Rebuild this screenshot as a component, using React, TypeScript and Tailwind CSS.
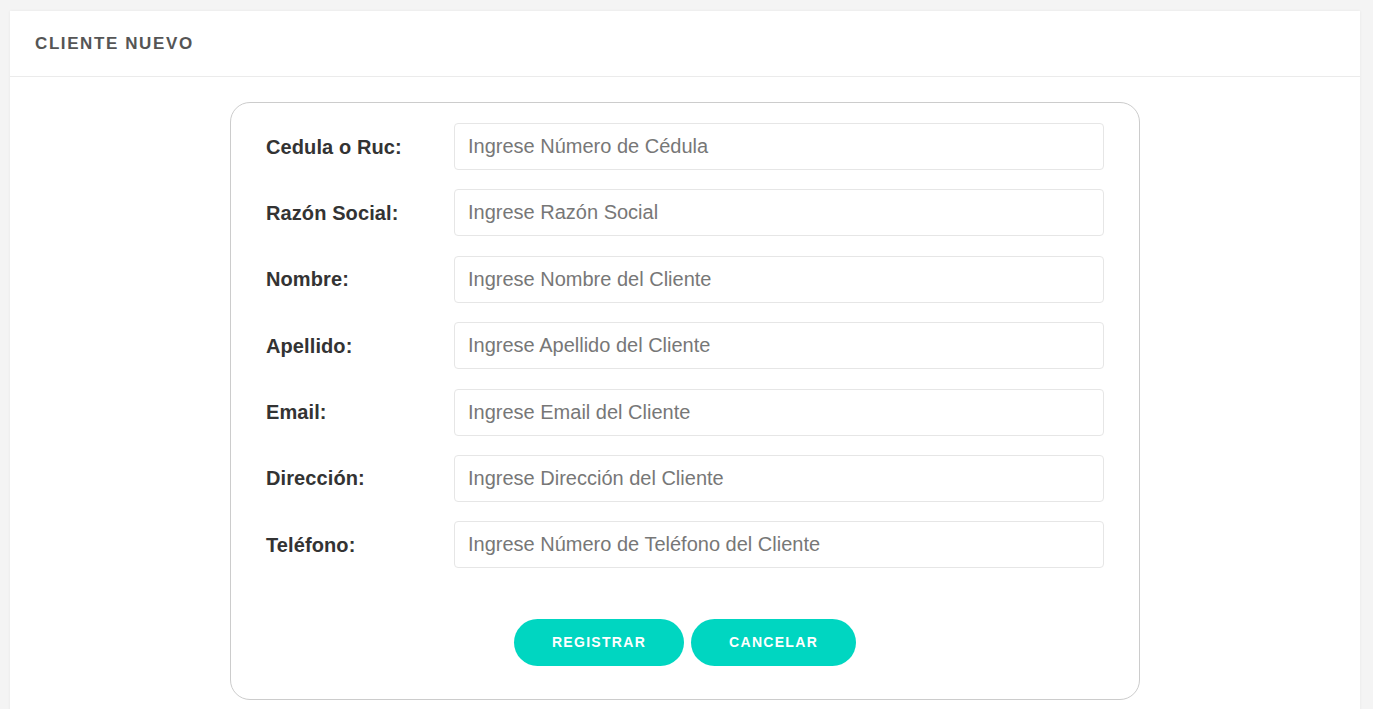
import React from "react";

const fields = [
  { label: "Cedula o Ruc:", ph: "Ingrese Número de Cédula" },
  { label: "Razón Social:", ph: "Ingrese Razón Social" },
  { label: "Nombre:", ph: "Ingrese Nombre del Cliente" },
  { label: "Apellido:", ph: "Ingrese Apellido del Cliente" },
  { label: "Email:", ph: "Ingrese Email del Cliente" },
  { label: "Dirección:", ph: "Ingrese Dirección del Cliente" },
  { label: "Teléfono:", ph: "Ingrese Número de Teléfono del Cliente" },
];

export default function App() {
  return (
    <div
      className="min-h-screen bg-[#f4f4f4] pt-[11px] pl-[10px] pr-[13px]"
      style={{ fontFamily: '"Liberation Sans", Arial, sans-serif' }}
    >
      <div className="bg-white min-h-[720px] shadow-[0_0_3px_rgba(0,0,0,0.06)]">
        <div className="h-[66px] border-b border-[#ebebeb] flex items-center pl-[25px]">
          <h1 className="text-[17px] font-bold tracking-[1.6px] text-[#555555] pt-[1px]">CLIENTE NUEVO</h1>
        </div>
        <div className="pt-[25px]">
          <div className="w-[910px] mx-auto border border-[#cccccc] rounded-[20px] pt-[20px] px-[35px] pb-[33px]">
            <div className="flex flex-col gap-[19.4px]">
              {fields.map((f) => (
                <div key={f.label} className="flex items-center">
                  <label className="w-[188px] shrink-0 text-[20px] font-bold text-[#333333] tracking-[0.1px]">{f.label}</label>
                  <input
                    type="text"
                    placeholder={f.ph}
                    className="flex-1 h-[47px] border border-[#e6e6e6] rounded-[4px] px-[13px] text-[20px] text-[#333] placeholder:text-[#777777] outline-none"
                  />
                </div>
              ))}
            </div>
            <div className="flex justify-center gap-[7px] mt-[51px]">
              <button className="h-[47px] px-[38px] rounded-full bg-[#00d6c1] text-white text-[14px] font-bold tracking-[1.3px]">
                REGISTRAR
              </button>
              <button className="h-[47px] px-[38px] rounded-full bg-[#00d6c1] text-white text-[14px] font-bold tracking-[1.3px]">
                CANCELAR
              </button>
            </div>
          </div>
        </div>
      </div>
    </div>
  );
}
